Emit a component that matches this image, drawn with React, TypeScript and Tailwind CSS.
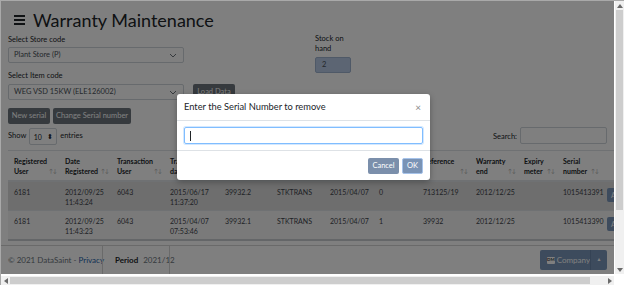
const HEADERS: [string, string][] = [
  ['Registered', 'User'],
  ['Date', 'Registered'],
  ['Transaction', 'User'],
  ['Transaction', 'date'],
  ['Transaction', 'no'],
  ['Type', ''],
  ['Date', ''],
  ['Quantity', ''],
  ['Reference', ''],
  ['Warranty', 'end'],
  ['Expiry', 'meter'],
  ['Serial', 'number'],
  ['', ''],
]

const WIDTHS = [51, 52, 53, 55, 52, 53, 49, 44, 53, 48, 39, 44, 60]

const ROWS: [string, string][][] = [
  [
    ['6181', ''],
    ['2012/09/25', '11:43:24'],
    ['6043', ''],
    ['2015/06/17', '11:37:20'],
    ['39932.2', ''],
    ['STKTRANS', ''],
    ['2015/04/07', ''],
    ['0', ''],
    ['713125/19', ''],
    ['2012/12/25', ''],
    ['', ''],
    ['1015413391', ''],
  ],
  [
    ['6181', ''],
    ['2012/09/25', '11:43:23'],
    ['6043', ''],
    ['2015/04/07', '07:53:46'],
    ['39932.1', ''],
    ['STKTRANS', ''],
    ['2015/04/07', ''],
    ['1', ''],
    ['39932', ''],
    ['2012/12/25', ''],
    ['', ''],
    ['1015413390', ''],
  ],
]

function Chevron() {
  return (
    <svg width="8" height="5" viewBox="0 0 8 5" className="shrink-0">
      <path d="M1 1l3 3 3-3" fill="none" stroke="#6c757d" strokeWidth="1" />
    </svg>
  )
}

function Arrow({ dir }: { dir: 'up' | 'down' | 'left' | 'right' }) {
  const d = {
    up: 'M0 4L3 0L6 4Z',
    down: 'M0 0L6 0L3 4Z',
    left: 'M4 0L4 6L0 3Z',
    right: 'M0 0L4 3L0 6Z',
  }[dir]
  const vertical = dir === 'up' || dir === 'down'
  return (
    <svg width={vertical ? 6 : 4} height={vertical ? 4 : 6} viewBox={vertical ? '0 0 6 4' : '0 0 4 6'}>
      <path d={d} fill="#6a6a6a" />
    </svg>
  )
}

export default function App() {
  return (
    <div className="flex h-[285px] w-[624px] flex-col overflow-hidden border-l border-t border-[#a9a9a9] bg-white font-['Lato',sans-serif] text-[#212529]">
      <div className="flex min-h-0 flex-1">
        {/* Page */}
        <div className="relative flex min-w-0 flex-1 flex-col overflow-hidden">
          <div className="min-h-0 flex-1 overflow-hidden pl-[7px] pr-[7px]">
            {/* Title */}
            <div className="ml-[6px] mt-[7px] flex h-[24px] items-center">
              <div className="flex w-[11px] flex-col gap-[2px]">
                <div className="h-[2px] bg-[#212529]" />
                <div className="h-[2px] bg-[#212529]" />
                <div className="h-[2px] bg-[#212529]" />
              </div>
              <h1 className="ml-[8px] text-[18px] font-normal leading-[24px]">Warranty Maintenance</h1>
            </div>

            {/* Selectors */}
            <div className="mt-[2px] flex whitespace-nowrap">
              <div className="w-[176px]">
                <div className="text-[7.5px] leading-[11px]">Select Store code</div>
                <div className="mt-[2px] flex h-[16px] items-center justify-between rounded-[2px] border border-[#ced4da] pl-[5px] pr-[6px] text-[7.5px] text-[#495057]">
                  Plant Store (P)
                  <Chevron />
                </div>
                <div className="mt-[7px] text-[7.5px] leading-[11px]">Select Item code</div>
                <div className="mt-[3px] flex h-[16px] items-center justify-between rounded-[2px] border border-[#ced4da] pl-[5px] pr-[6px] text-[7.5px] text-[#495057]">
                  WEG VSD 15KW (ELE126002)
                  <Chevron />
                </div>
              </div>
              <div className="ml-[9px] flex w-[122px] items-end">
                <button className="h-[16px] w-[42px] rounded-[2px] bg-[#6c757d] text-[7.5px] text-white">Load Data</button>
              </div>
              <div>
                <div className="text-[7.5px] leading-[10px]">
                  Stock on
                  <br />
                  hand
                </div>
                <div className="mt-[3px] flex h-[16px] w-[36px] items-center rounded-[2px] border border-[#9fb3cf] bg-[#b8cae6] pl-[6px] text-[7.5px] text-[#495057]">
                  2
                </div>
              </div>
            </div>

            {/* Actions */}
            <div className="mt-[8px] flex gap-[3px] whitespace-nowrap">
              <button className="h-[16px] w-[42px] rounded-[2px] bg-[#6c757d] text-[7.5px] text-white">New serial</button>
              <button className="h-[16px] w-[78px] rounded-[2px] bg-[#6c757d] text-[7.5px] text-white">Change Serial number</button>
            </div>

            {/* Show / search */}
            <div className="mt-[3px] flex h-[18px] items-start justify-between text-[7.5px]">
              <div className="flex items-start">
                <span className="mt-[3px]">Show</span>
                <div className="ml-[3px] mt-[1px] flex h-[17px] w-[28px] items-end justify-center gap-[5px] rounded-[2px] border border-[#ced4da] pb-[2px] text-[7px]">
                  10 <span className="text-[6.5px]">⬍</span>
                </div>
                <span className="ml-[3px] mt-[3px]">entries</span>
              </div>
              <div className="flex items-center">
                <span className="mt-[2px]">Search:</span>
                <div className="ml-[3px] h-[17px] w-[87px] rounded-[2px] border border-[#ced4da]" />
              </div>
            </div>

            {/* Table */}
            <table className="mt-[5px] table-fixed border-collapse whitespace-nowrap text-[7px]" style={{ width: WIDTHS.reduce((a, b) => a + b, 0) }}>
              <colgroup>
                {WIDTHS.map((w, i) => (
                  <col key={i} style={{ width: w }} />
                ))}
              </colgroup>
              <thead>
                <tr>
                  {HEADERS.map(([a, b], i) => (
                    <th
                      key={i}
                      className="relative border-b-2 border-t border-[#dee2e6] pb-[4px] pl-[6px] pt-[5px] text-left align-top font-bold leading-[10px]"
                    >
                      {a}
                      <br />
                      {b}
                      {a && (
                        <span className="absolute bottom-[6px] right-[2px] text-[5.5px] font-normal leading-[6px] text-[#a8a8a8]">↑↓</span>
                      )}
                    </th>
                  ))}
                </tr>
              </thead>
              <tbody>
                {ROWS.map((row, r) => (
                  <tr key={r} className={r === 0 ? 'bg-[#dcdcdc]' : 'bg-[#f5f5f5]'}>
                    {row.map(([a, b], i) => (
                      <td key={i} className="border-t border-[#dee2e6] pb-[3px] pl-[6px] pt-[5px] align-top leading-[10px] text-[#3d434a]">
                        {a}
                        <br />
                        {b}
                      </td>
                    ))}
                    <td className="overflow-hidden border-t border-[#dee2e6] pl-[6px] pt-[6px] align-top">
                      <button className="h-[14px] rounded-[2px] bg-[#7a96ba] px-[4px] text-[7px] text-white">Actions</button>
                    </td>
                  </tr>
                ))}
                <tr>
                  <td colSpan={13} className="h-0 border-t-2 border-[#c8ccd0]" />
                </tr>
              </tbody>
            </table>
          </div>

          {/* Footer */}
          <footer className="flex h-[29px] shrink-0 items-center whitespace-nowrap border-t border-[#d5d5d5] pl-[7px] pr-[7px] text-[8px]">
            <div className="w-[94px] text-[#6c757d]">
              © 2021 DataSaint - <span className="text-[#1b5fa8]">Privacy</span>
            </div>
            <div className="flex h-full w-[67px] items-center border-l border-[#d5d5d5] pl-[12px]">
              <span className="font-bold">Period</span>
              <span className="ml-[5px] text-[#6c757d]">2021/12</span>
            </div>
            <div className="h-full border-l border-[#d5d5d5]" />
            <div className="ml-auto flex h-[20px] overflow-hidden rounded-[2px] bg-[#7a96ba] text-white">
              <div className="flex w-[50px] items-center pl-[7px]">
                <span className="flex h-[7px] w-[13px] items-center justify-center rounded-[1px] bg-white text-[4.5px] font-bold text-[#343a40]">
                  DM
                </span>
                <span className="ml-[2px] text-[8px]">Company</span>
              </div>
              <div className="flex w-[17px] items-center justify-center border-l border-[#6a86aa] text-[5px]">▲</div>
            </div>
          </footer>

          {/* Backdrop */}
          <div className="absolute inset-0 bg-black/50" />

          {/* Modal */}
          <div className="absolute left-[176px] top-[93px] w-[253px] rounded-[3px] bg-white shadow-[0_2px_6px_rgba(0,0,0,0.3)]">
            <div className="flex h-[27px] items-center justify-between border-b border-[#dee2e6] px-[7px]">
              <span className="text-[9.3px]">Enter the Serial Number to remove</span>
              <span className="mr-[2px] text-[10px] leading-none text-[#8a8a8a]">×</span>
            </div>
            <div className="px-[7px] py-[6px]">
              <div className="flex h-[17px] items-center rounded-[2px] border border-[#80bdff] pl-[5px] shadow-[0_0_0_1px_rgba(128,189,255,0.35)]">
                <div className="h-[10px] w-px bg-[#212529]" />
              </div>
            </div>
            <div className="flex h-[30px] items-start justify-end gap-[3px] border-t border-[#dee2e6] pr-[7px] pt-[7px]">
              <button className="h-[16px] w-[31px] rounded-[2px] bg-[#7b8fab] text-[7.5px] text-white">Cancel</button>
              <button className="h-[16px] w-[21px] rounded-[2px] border border-[#a6c3ea] bg-[#7a93b5] text-[7.5px] text-white">OK</button>
            </div>
          </div>
        </div>

        {/* Vertical scrollbar */}
        <div className="flex w-[10px] flex-col items-center border-l border-white bg-[#f0f0f0]">
          <div className="flex h-[9px] items-center">
            <Arrow dir="up" />
          </div>
          <div className="h-[200px] w-[7px] bg-[#cdcdcd]" />
          <div className="flex-1" />
          <div className="flex h-[9px] items-center">
            <Arrow dir="down" />
          </div>
        </div>
      </div>

      {/* Horizontal scrollbar */}
      <div className="flex h-[11px] border-t-2 border-white bg-[#f0f0f0]">
        <div className="flex w-[9px] items-center justify-center">
          <Arrow dir="left" />
        </div>
        <div className="my-[1px] w-[580px] bg-[#cdcdcd]" />
        <div className="flex-1" />
        <div className="flex w-[9px] items-center justify-center">
          <Arrow dir="right" />
        </div>
        <div className="w-[10px] bg-white" />
      </div>
    </div>
  )
}
